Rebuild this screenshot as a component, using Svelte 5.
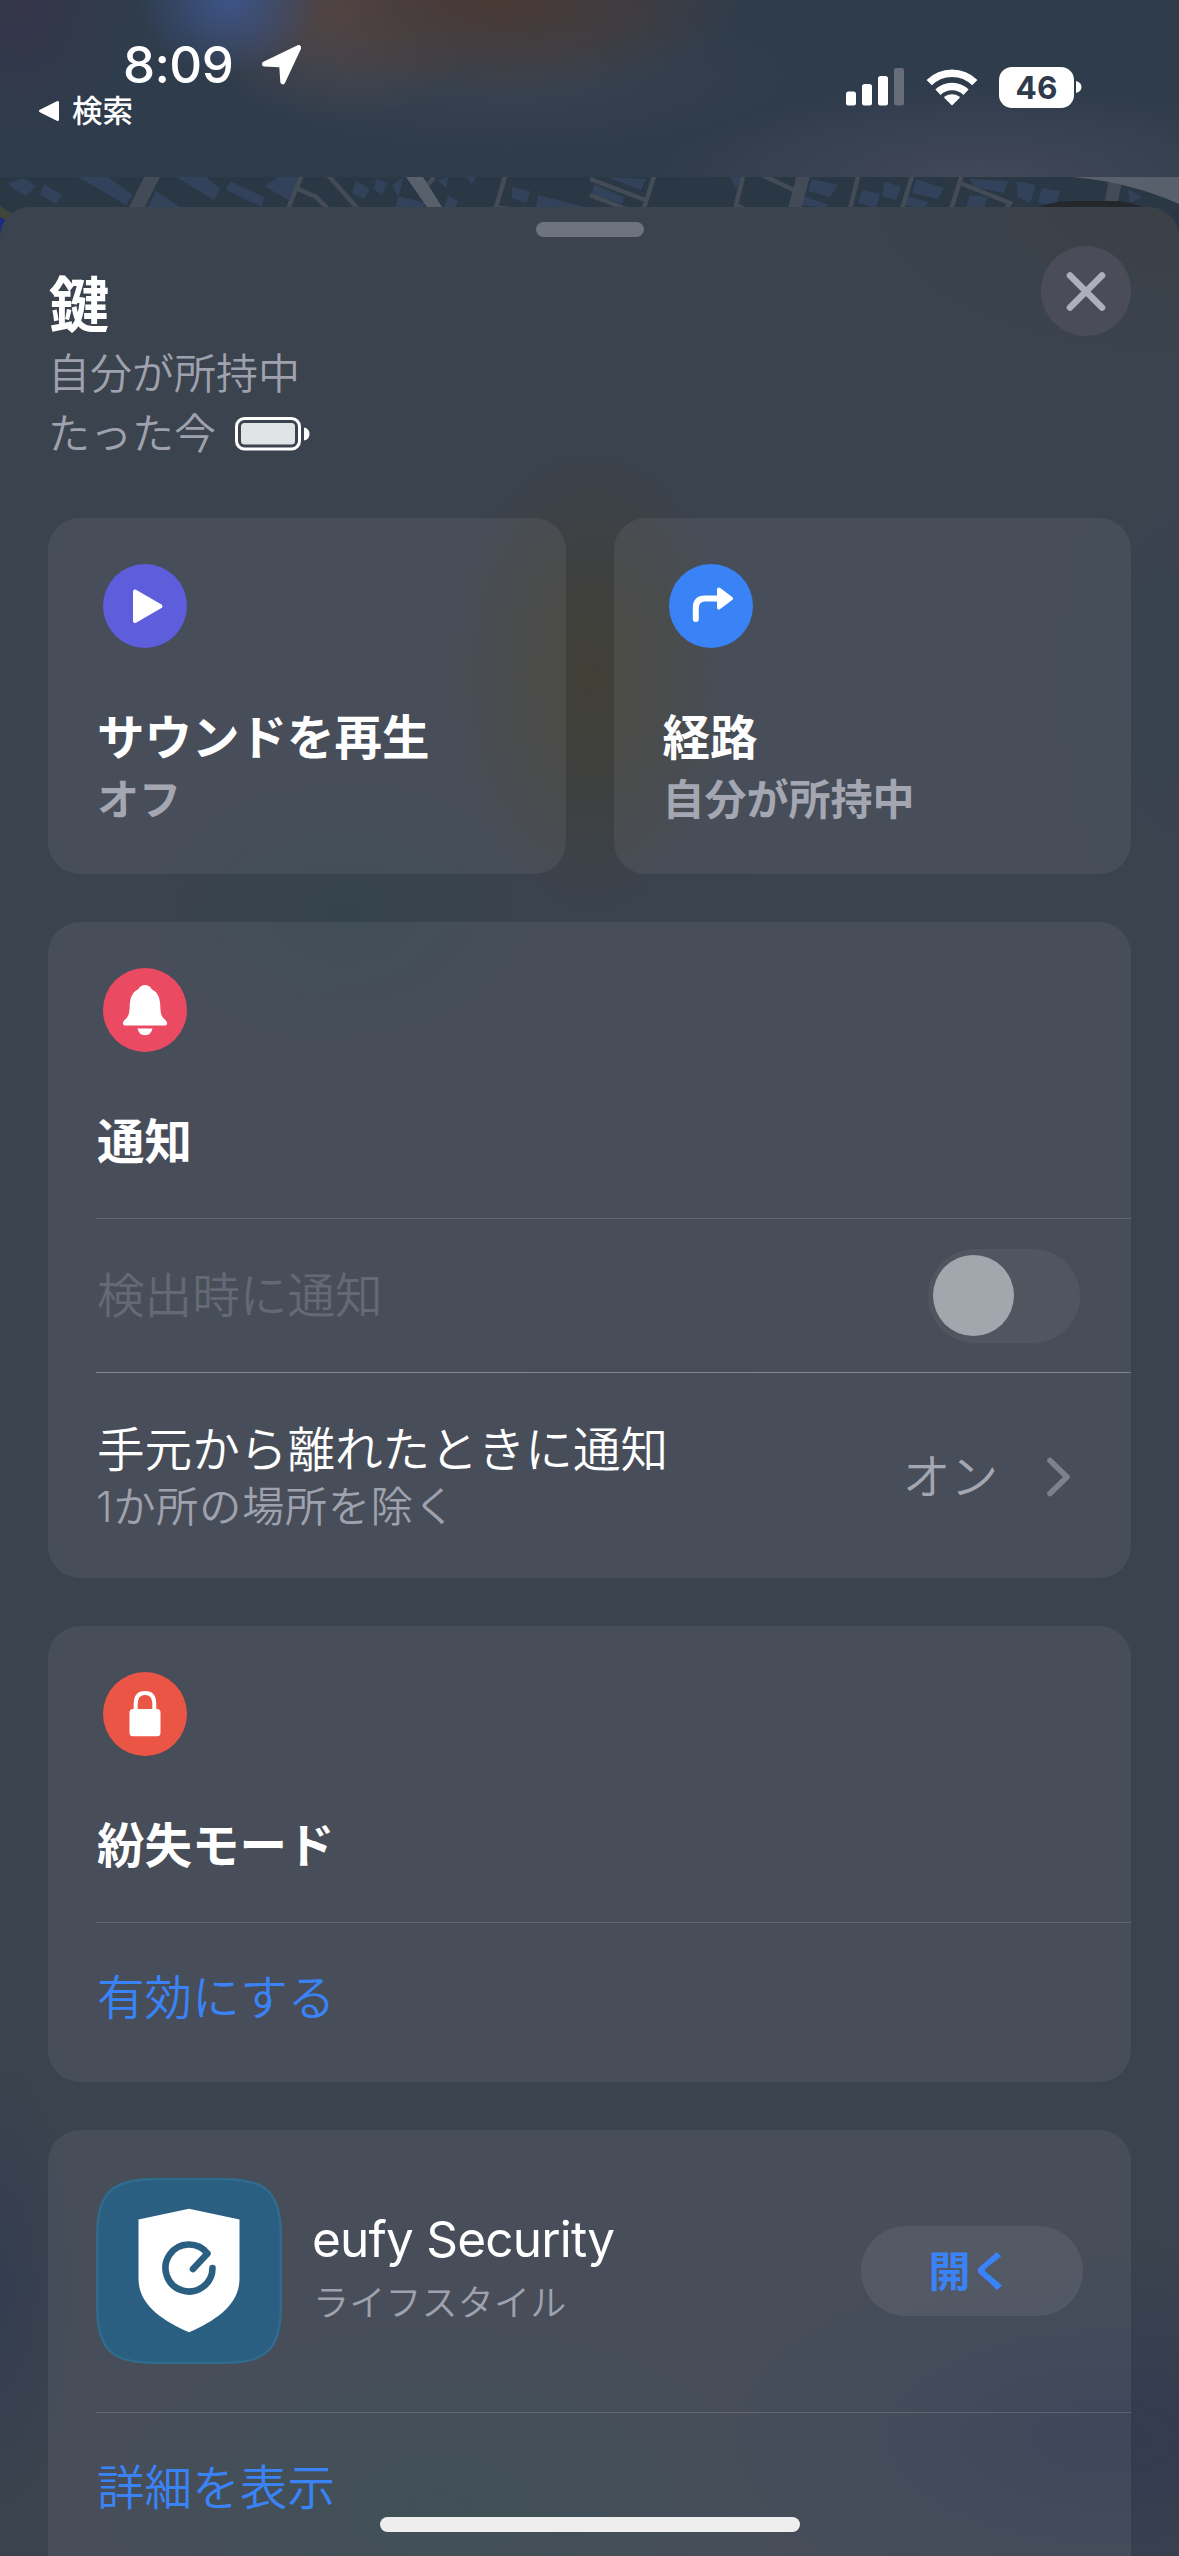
<script>
  const hasApp = { name: 'eufy Security', category: 'ライフスタイル' };
</script>

<div class="screen">
  <header class="status">
    <div class="left">
      <div class="clock">
        <span class="time">8:09</span>
        <svg class="loc" viewBox="0 0 40 40"><path d="M37.2 2.8 21.3 37 20.3 22 Q20 20 18 20 L3 19.3 Z" fill="#fff" stroke="#fff" stroke-width="5" stroke-linejoin="round" transform="translate(.5 -.2)" /></svg>
      </div>
      <div class="back">
        <svg viewBox="0 0 22 22"><path d="M2.5 11 19.5 2.500V19.500Z" fill="#fff" stroke="#fff" stroke-width="3" stroke-linejoin="round" /></svg>
        <span>検索</span>
      </div>
    </div>
    <div class="right">
      <svg class="signal" viewBox="0 0 58 38">
        <rect x="0" y="23.500" width="10" height="14" rx="2.500" fill="#fff" />
        <rect x="16" y="16" width="10" height="21.500" rx="2.500" fill="#fff" />
        <rect x="32" y="8" width="10" height="29.500" rx="2.500" fill="#fff" />
        <rect x="48" y="0" width="10" height="37.500" rx="2.500" fill="#666d79" />
      </svg>
      <svg class="wifi" viewBox="0 0 52 38">
        <g fill="none" stroke="#fff" stroke-width="7.500">
          <path d="M3.200 14.700A32.300 32.300 0 0 1 48.800 14.700" />
          <path d="M12 24.200A20 20 0 0 1 40 24.200" />
        </g>
        <path d="M26 37.500 18.500 30Q17.700 29.200 18.700 28.500A12.500 12.500 0 0 1 33.300 28.500Q34.300 29.200 33.500 30Z" fill="#fff" />
      </svg>
      <div class="charge"><span class="pct">46</span><svg viewBox="0 0 6 14"><path d="M0 1Q5.500 2.500 5.500 7T0 13Z" fill="#fff" /></svg></div>
    </div>
  </header>

  <svg class="map" viewBox="0 0 1179 64" preserveAspectRatio="none">
    <rect width="1179" height="64" fill="#2a3744" />
    <g fill="#31425a">
      <path d="M8 6 24 1 36 9 26 19 14 12ZM44 7 62 18 56 27 40 18ZM78 0H108L133 18 126 28ZM176 0H206L220 12 214 23ZM230 4 264 20 262 30 226 13ZM148 30 156 14 180 30ZM264 9 278 0H300L290 24ZM356 4 370 12 364 22 352 16ZM376 2 388 6 382 18 374 12ZM392 8 404 0 398 20ZM438 3 448 0 446 11ZM466 0H476L472 7ZM512 10 530 14 527 26 512 21ZM538 18 586 30H536Z" />
      <path d="M606 0 646 2 641 13 612 2ZM594 7 624 20 622 27 592 17ZM730 0H742L736 12ZM812 2 838 8 830 20 808 14ZM802 18 828 28 826 31 800 28ZM862 13 880 17 876 31 858 26ZM884 4 901 10 896 23 882 19ZM916 2 944 11 938 22 912 16ZM906 19 928 25 925 31 903 28ZM970 2 1008 4 1004 16 974 10ZM970 18 988 20 984 31 966 30ZM1016 4 1036 8 1030 26 1018 20ZM1042 11 1060 14 1056 29 1038 26ZM1128 12 1142 20 1130 26ZM398 19 426 26 422 31 396 30ZM448 19 458 24 456 30H444Z" />
    </g>
    <g fill="none" stroke="#434c56">
      <path d="M154-4 134 36" stroke-width="14" />
      <path d="M302-2 287 34M298 12 316 20 328 32M326-4 358 32M506-4 495 34M496 30 510 32M434 0 426 10M590 2 648 24M590 18 626 32M655-4 643 34M743 0 736 28 744 32M762-2 800 16M859-4 850 32M913-4 902 32M962-2 951 32M960 6 1010 26 1006 32" stroke-width="4.500" />
      <path d="M804-4 794 34M1116 0 1110 32" stroke-width="13" />
    </g>
    <path d="M406 0H423L442 30H427Z" fill="#58606b" />
    <path d="M1072 0H1179V27Q1130 5 1072 0Z" fill="#58606b" />
    <path d="M1036 31Q1050 25 1070 24H1118Q1132 25 1146 32Z" fill="#24282d" />
    <path d="M0 29 14 38 0 50Z" fill="#3f4738" />
    <path d="M0 40 8 44 0 64Z" fill="#1e2b80" />
  </svg>

  <main class="sheet">
    <div class="grabber"></div>
    <div class="heading">
      <div>
        <h1>鍵</h1>
        <p class="meta">自分が所持中</p>
        <p class="meta">たった今
          <svg class="batt" viewBox="0 0 75 34"><rect x="1.500" y="1.500" width="63" height="30.500" rx="8" fill="none" stroke="#fff" stroke-width="3" /><rect x="6" y="6" width="54" height="21.500" rx="3.500" fill="#e1e4e6" /><path d="M69 10.500Q74.500 11.500 74.500 17T69 23.500Z" fill="#fff" /></svg>
        </p>
      </div>
      <button class="close" aria-label="閉じる"><svg viewBox="0 0 90 90"><path d="M29 29.500 61 61.500M61 29.500 29 61.500" stroke="#adb0ba" stroke-width="6.600" stroke-linecap="round" /></svg></button>
    </div>

    <div class="pair">
      <section class="card">
        <div class="head">
          <svg class="badge" viewBox="0 0 84 84"><circle cx="42" cy="42" r="42" fill="#5e5ddc" /><path d="M32 27.500 57.500 42.300 32 57Z" fill="#fff" stroke="#fff" stroke-width="4" stroke-linejoin="round" /></svg>
          <h2>サウンドを再生</h2>
          <p class="state">オフ</p>
        </div>
      </section>
      <section class="card">
        <div class="head">
          <svg class="badge" viewBox="0 0 84 84"><circle cx="42" cy="42" r="42" fill="#3a83f7" /><path d="M26.800 55V44Q26.800 34.500 36 34.500H50" fill="none" stroke="#fff" stroke-width="6" stroke-linecap="round" /><path d="M50 25.500 62 34.500 50 43.500Z" fill="#fff" stroke="#fff" stroke-width="4" stroke-linejoin="round" /></svg>
          <h2>経路</h2>
          <p class="state">自分が所持中</p>
        </div>
      </section>
    </div>

    <section class="card notify">
      <div class="head">
        <svg class="badge" viewBox="0 0 84 84"><circle cx="42" cy="42" r="42" fill="#ea4b62" /><path d="M42 17Q46.500 17 49 21.500C55.500 24.500 57 31 57.300 38C57.600 47 58.500 48.500 62.500 52Q64.500 54.500 64 56Q63.500 57.500 61.500 57.500H22.500Q20.500 57.500 20 56Q19.500 54.500 21.500 52C25.500 48.500 26.400 47 26.700 38C27 31 28.500 24.500 35 21.500Q37.500 17 42 17Z" fill="#fff" /><path d="M34.500 60.500H49.500Q48 67.300 42 67.300T34.500 60.500Z" fill="#fff" /></svg>
        <h2>通知</h2>
      </div>
      <div class="row first">
        <span class="label off">検出時に通知</span>
        <span class="toggle"><i></i></span>
      </div>
      <div class="row second">
        <div>
          <p class="label">手元から離れたときに通知</p>
          <p class="note">1か所の場所を除く</p>
        </div>
        <div class="value"><span>オン</span><svg viewBox="0 0 24 40"><path d="M3 3.500 20 20 3 36.500" fill="none" stroke="#7c828c" stroke-width="5.600" stroke-linecap="round" stroke-linejoin="round" /></svg></div>
      </div>
    </section>

    <section class="card lost">
      <div class="head">
        <svg class="badge" viewBox="0 0 84 84"><circle cx="42" cy="42" r="42" fill="#eb5545" /><rect x="26.500" y="37" width="31" height="27.300" rx="3.500" fill="#fff" /><path d="M32.700 39V32Q32.700 20.900 42 20.900T51.300 32V39" fill="none" stroke="#fff" stroke-width="4" /></svg>
        <h2>紛失モード</h2>
      </div>
      <div class="row action"><span class="label link">有効にする</span></div>
    </section>

    <section class="card app">
      <div class="product">
        <svg class="logo" viewBox="0 0 186 186">
          <path d="M1.200 58C1.200 15 15 1.200 58 1.200H128C171 1.200 184.800 15 184.800 58V128C184.800 171 171 184.800 128 184.800H58C15 184.800 1.200 171 1.200 128Z" fill="#2b5f82" stroke="#2f6c8e" stroke-width="2.400" />
          <path d="M93 30.700 143.500 41.500V101C143.500 126 121 142 93 154.300C65 142 42.500 126 42.500 101V41.500Z" fill="#fff" />
          <path d="M97 91 111.500 75.500A23.500 23.500 0 1 0 116.500 90" fill="none" stroke="#2b5f82" stroke-width="6.600" stroke-linecap="round" stroke-linejoin="round" />
        </svg>
        <div class="info"><p class="name">{hasApp.name}</p><p class="cat">{hasApp.category}</p></div>
        <button class="open"><span>開く</span></button>
      </div>
      <div class="row action"><span class="label link">詳細を表示</span></div>
    </section>
  </main>
  <div class="home"></div>
</div>

<style>
  :global(body) { margin: 0; background: #3b434e; }
  .screen {
    position: relative; width: 1179px; height: 2556px; overflow: hidden;
    display: flex; flex-direction: column;
    font-family: Inter, "Noto Sans CJK JP", sans-serif; color: #fff;
  }
  h1, h2, p { margin: 0; }
  svg { display: block; flex: none; }
  button { border: 0; padding: 0; font-family: inherit; }
  .status {
    flex: none; box-sizing: border-box; height: 177px; padding: 35px 97px 0 38px;
    display: flex; justify-content: space-between;
    background:
      radial-gradient(ellipse 90px 75px at 228px 0, #3d5488 0, #3d548800 100%),
      radial-gradient(ellipse 250px 95px at 500px 0, #4a3a35 0, #4b3c3899 50%, #4b3c3800 100%),
      radial-gradient(ellipse 150px 110px at 340px 10px, #55494a 0, #55494a00 100%),
      radial-gradient(ellipse 320px 90px at 980px 177px, #424858 0, #42485800 100%),
      radial-gradient(ellipse 280px 75px at 510px 75px, #40465299 0, #40465200 100%),
      radial-gradient(ellipse 110px 140px at 20px 0, #35354a 0, #35354a00 100%),
      #2f3c4c;
  }
  .clock { display: flex; align-items: center; height: 60px; padding-left: 85px; }
  .time { font-size: 51px; font-weight: 550; line-height: 60px; letter-spacing: -.6px; width: 138px; }
  .loc { width: 40px; height: 40px; }
  .back { display: flex; align-items: center; gap: 12px; height: 32px; font-size: 30.500px; line-height: 32px; font-weight: 500; }
  .back svg { width: 22px; height: 22px; }
  .right { display: flex; align-items: center; height: 42px; margin-top: 31px; }
  .signal { width: 58px; height: 38px; margin-right: 22px; }
  .wifi { width: 52px; height: 38px; margin-right: 21px; }
  .charge { display: flex; align-items: center; gap: 2px; }
  .charge svg { width: 6px; height: 14px; }
  .pct { width: 75px; height: 41px; border-radius: 13px; background: #fff; color: #2f3a4b; font-size: 31.500px; line-height: 41px; font-weight: 700; text-align: center; }
  .map { width: 1179px; height: 64px; }
  .sheet {
    position: relative; flex: none; box-sizing: border-box; height: 2349px; margin-top: -34px; padding: 15px 48px 0;
    border-radius: 30px 30px 0 0; overflow: hidden;
    background:
      radial-gradient(ellipse 150px 240px at 590px 470px, #413f36 0, #413f3699 45%, #413f3600 100%),
      radial-gradient(ellipse 190px 130px at 345px 705px, #32444ab3 0, #32444a00 100%),
      radial-gradient(ellipse 120px 260px at 1179px 470px, #37434fcc 0, #37434f00 100%),
      radial-gradient(ellipse 420px 200px at 1110px 2230px, #343a50 0, #343a5000 100%),
      radial-gradient(ellipse 330px 180px at 440px 2300px, #33464ccc 0, #33464c00 100%),
      radial-gradient(ellipse 80px 230px at 0 2080px, #343d50 0, #343d5000 100%),
      radial-gradient(ellipse 400px 300px at 640px 950px, #3e404a66 0, #3e404a00 100%),
      radial-gradient(ellipse 330px 160px at 1179px 0, #3a4046 0, #3a404600 100%),
      #3b434e;
  }
  .grabber { width: 108px; height: 15px; border-radius: 8px; background: #6e737e; margin: 0 auto 9px; }
  .heading { display: flex; justify-content: space-between; align-items: flex-start; height: 272px; }
  h1 { padding: 23px 0 0 1px; font-size: 60px; line-height: 72px; font-weight: 700; margin-bottom: 3px; }
  .meta { display: flex; align-items: center; gap: 19px; font-size: 42px; line-height: 60px; height: 60px; font-weight: 350; color: #9fa2ae; }
  .batt { width: 75px; height: 34px; }
  .close { width: 90px; height: 90px; border-radius: 50%; background: #4a4d58; }
  .pair { display: grid; grid-template-columns: 1fr 1fr; gap: 48px; height: 356px; }
  .card { box-sizing: border-box; border-radius: 32px; background: #ffffff10; margin-bottom: 48px; overflow: hidden; }
  .pair .card { margin: 0; }
  .pair { margin-bottom: 48px; }
  .head { box-sizing: border-box; height: 296px; padding: 46px 48px 0; }
  .badge { width: 84px; height: 84px; margin-left: 7px; }
  h2 { margin-top: 62px; padding-left: 1px; font-size: 47.500px; line-height: 56px; font-weight: 700; white-space: nowrap; }
  .state { margin-top: 10px; padding-left: 1px; font-size: 42px; line-height: 48px; font-weight: 600; color: #a4a7b2; white-space: nowrap; }
  .notify { height: 656px; }
  .lost { height: 456px; }
  .row { box-sizing: border-box; height: 154px; margin-left: 48px; border-top: 1px solid #ffffff26; display: flex; align-items: center; justify-content: space-between; }
  .action { padding-bottom: 4px; }
  .first { padding-right: 51px; }
  .second { height: 206px; border-top-color: #ffffff50; padding: 2px 60px 0 0; }
  .label { padding-left: 1px; font-size: 47.600px; line-height: 60px; font-weight: 350; }
  .off { color: #646973; }
  .link { color: #3a83f7; }
  .note { font-size: 42px; line-height: 54px; font-weight: 350; letter-spacing: .9px; color: #9fa2ae; }
  .toggle { box-sizing: border-box; width: 152px; height: 94px; border-radius: 47px; background: #ffffff0c; padding: 6px 5px; }
  .toggle i { display: block; width: 81px; height: 81px; border-radius: 50%; background: #a2a6ad; }
  .value { display: flex; align-items: center; gap: 49px; font-size: 47.600px; line-height: 60px; font-weight: 350; color: #a4a7b2; }
  .value svg { width: 24px; height: 40px; }
  .app { height: 480px; }
  .product { box-sizing: border-box; height: 282px; padding: 48px 48px 0; display: flex; }
  .logo { width: 186px; height: 186px; }
  .info { flex: 1; padding: 31px 0 0 30px; }
  .name { font-size: 49.500px; line-height: 60px; font-weight: 400; letter-spacing: -.8px; }
  .cat { margin-top: 9px; padding-left: 1px; font-size: 36px; line-height: 50px; font-weight: 350; letter-spacing: .2px; color: #9fa2ae; }
  .open { width: 222px; height: 90px; border-radius: 45px; margin-top: 48px; background: #ffffff12; color: #3a83f7; font-size: 42px; font-weight: 700; }
  .open span { display: block; padding: 0 3px 5px 0; }
  .home { position: absolute; left: 380px; top: 2517px; width: 420px; height: 15px; border-radius: 8px; background: #eee; }
</style>
